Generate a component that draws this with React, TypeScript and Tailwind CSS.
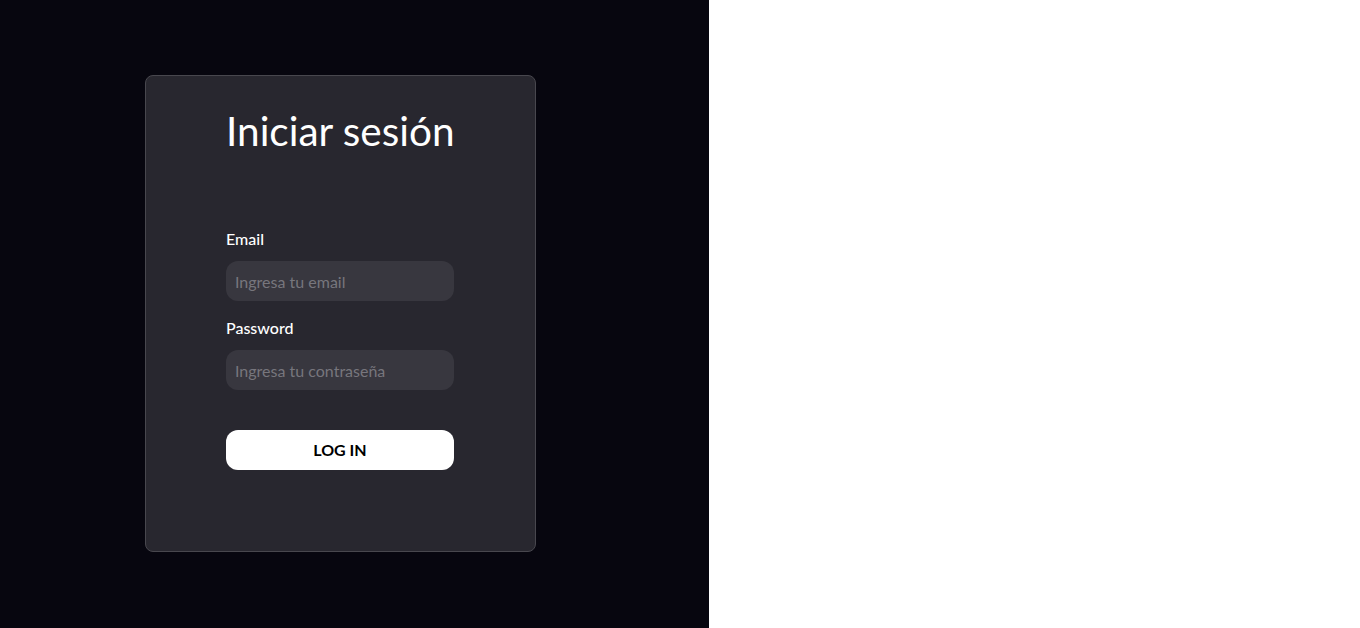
import React from 'react';

const App: React.FC = () => {
  return (
    <div className="flex h-[628px] w-[1360px] font-['Lato',sans-serif]">
      <div className="h-full w-[709px] bg-[#07060f] pl-[145px] pt-[75px]">
        <div className="h-[477px] w-[391px] rounded-lg border border-[#48474e] bg-[#28272f] pl-[80px] pt-[31px]">
          <div className="flex w-[228px] flex-col">
            <h1 className="whitespace-nowrap text-center text-[40.5px] leading-[48px] text-white">Iniciar sesión</h1>

            <form className="mt-[74px] flex flex-col">
              <label className="text-[16px] font-medium leading-[19px] text-white">Email</label>
              <input
                type="email"
                placeholder="Ingresa tu email"
                className="mt-[13px] h-[40px] rounded-xl bg-[#38373f] pl-[9px] pr-2 text-[16px] text-white placeholder:text-[#77767d] outline-none"
              />
              <label className="mt-[17px] text-[16px] font-medium leading-[19px] text-white">Password</label>
              <input
                type="password"
                placeholder="Ingresa tu contraseña"
                className="mt-[13px] h-[40px] rounded-xl bg-[#38373f] pl-[9px] pr-2 text-[16px] text-white placeholder:text-[#77767d] outline-none"
              />
              <button
                type="button"
                className="mt-[40px] h-[40px] rounded-xl bg-white text-[16px] font-bold text-black"
              >
                LOG IN
              </button>
            </form>
          </div>
        </div>
      </div>
      <div className="h-full flex-1 bg-white" />
    </div>
  );
};

export default App;
